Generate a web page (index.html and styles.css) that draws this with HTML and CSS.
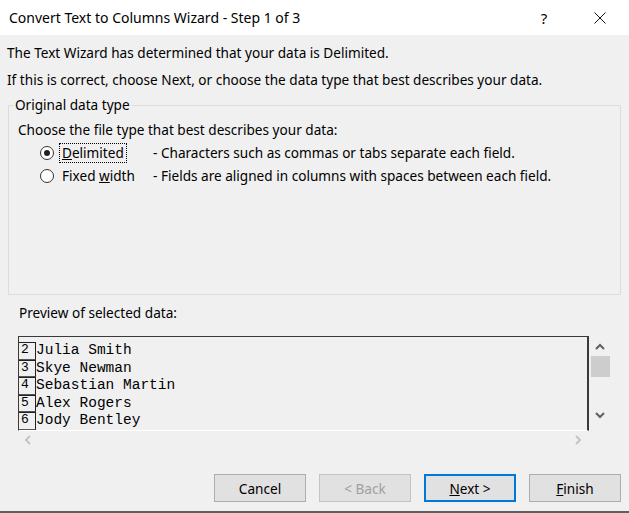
FILE: index.html
```html
<!DOCTYPE html>
<html lang="en">
<head>
<meta charset="utf-8">
<title>Convert Text to Columns Wizard</title>
<link rel="stylesheet" href="styles.css">
</head>
<body>
<div class="window">
  <header class="titlebar">
    <span class="title">Convert Text to Columns Wizard - Step 1 of 3</span>
    <span class="help">?</span>
    <span class="close">
      <svg width="12" height="12" viewBox="0 0 12 12"><path d="M0.5 0.5L11.5 11.5M11.5 0.5L0.5 11.5" stroke="#111" stroke-width="1" fill="none"/></svg>
    </span>
  </header>
  <main class="content">
    <p class="line">The Text Wizard has determined that your data is Delimited.</p>
    <p class="line">If this is correct, choose Next, or choose the data type that best describes your data.</p>
    <fieldset class="group">
      <legend class="legend">Original data type</legend>
      <div class="choose">Choose the file type that best describes your data:</div>
      <div class="option">
        <span class="radio checked"></span>
        <span class="opt-label"><span class="focus"><u>D</u>elimited</span></span>
        <span class="desc">- Characters such as commas or tabs separate each field.</span>
      </div>
      <div class="option">
        <span class="radio"></span>
        <span class="opt-label"><span class="nofocus">Fixed <u>w</u>idth</span></span>
        <span class="desc">- Fields are aligned in columns with spaces between each field.</span>
      </div>
    </fieldset>
    <div class="preview-label">Preview of selected data:</div>
    <div class="preview">
      <div class="pbox">
        <div class="prow"><span class="num">2</span><span class="val">Julia Smith</span></div>
        <div class="prow"><span class="num">3</span><span class="val">Skye Newman</span></div>
        <div class="prow"><span class="num">4</span><span class="val">Sebastian Martin</span></div>
        <div class="prow"><span class="num">5</span><span class="val">Alex Rogers</span></div>
        <div class="prow"><span class="num">6</span><span class="val">Jody Bentley</span></div>
        <div class="prow"><span class="num"></span></div>
      </div>
      <div class="vscroll">
        <span class="arrow-v"><svg width="10" height="7" viewBox="0 0 10 7"><path d="M1 6L5 2L9 6" stroke="#606060" stroke-width="2" fill="none"/></svg></span>
        <span class="thumb"></span>
        <span class="arrow-v down"><svg width="10" height="7" viewBox="0 0 10 7"><path d="M1 1L5 5L9 1" stroke="#606060" stroke-width="2" fill="none"/></svg></span>
      </div>
      <div class="hscroll">
        <svg width="7" height="10" viewBox="0 0 7 10"><path d="M6 1L2 5L6 9" stroke="#c4c4c4" stroke-width="2" fill="none"/></svg>
        <svg width="7" height="10" viewBox="0 0 7 10"><path d="M1 1L5 5L1 9" stroke="#c4c4c4" stroke-width="2" fill="none"/></svg>
      </div>
    </div>
    <div class="buttons">
      <button class="btn">Cancel</button>
      <button class="btn disabled">&lt; Back</button>
      <button class="btn default"><u>N</u>ext &gt;</button>
      <button class="btn"><u>F</u>inish</button>
    </div>
  </main>
  <div class="edge"></div>
</div>
</body>
</html>
```

FILE: styles.css
```css
* { box-sizing: border-box; }

html, body {
  margin: 0;
  padding: 0;
}

body {
  width: 629px;
  height: 513px;
  overflow: hidden;
  background: #f0f0f0;
  font-family: "Noto Sans", "Liberation Sans", sans-serif;
  font-size: 13.6px;
  color: #000;
}

.window {
  width: 629px;
  height: 513px;
  display: flex;
  flex-direction: column;
}

.titlebar {
  height: 35px;
  flex: none;
  background: #fff;
  display: flex;
  align-items: center;
  padding: 0 14px 0 9px;
}

.title {
  font-size: 14px;
  flex: 1;
  white-space: nowrap;
}

.help {
  width: 30px;
  text-align: center;
  font-size: 15px;
}

.close {
  width: 30px;
  margin-left: 26px;
  display: flex;
  justify-content: center;
  align-items: center;
}

.content {
  flex: 1;
  padding: 4px 7px 0 7px;
  display: flex;
  flex-direction: column;
}

.line {
  margin: 0;
  line-height: 27px;
  white-space: nowrap;
}

.group {
  margin: 4px 1px 0 1px;
  padding: 6px 9px 0 9px;
  border: 1px solid #dcdcdc;
  height: 198px;
  min-width: 0;
}

.legend {
  padding: 0 2px;
  margin-left: -5px;
  line-height: 16px;
}

.choose {
  line-height: 22px;
  white-space: nowrap;
}

.option {
  height: 23px;
  display: flex;
  align-items: center;
  white-space: nowrap;
}

.radio {
  width: 14px;
  height: 14px;
  border-radius: 50%;
  border: 1px solid #333;
  background: #fff;
  margin-left: 22px;
  margin-right: 5px;
  flex: none;
  display: flex;
  align-items: center;
  justify-content: center;
}

.radio.checked::after {
  content: "";
  width: 6px;
  height: 6px;
  border-radius: 50%;
  background: #222;
}

.opt-label {
  width: 94px;
  flex: none;
}

.focus, .nofocus {
  display: inline-block;
  line-height: 16px;
  padding: 1px 2px;
  border: 1px dotted #000;
}

.nofocus {
  border-color: transparent;
}

.preview-label {
  margin-top: 8px;
  padding-left: 12px;
  line-height: 20px;
}

.preview {
  margin-top: 13px;
  margin-left: 11px;
  display: grid;
  grid-template-columns: 571px 22px;
  grid-template-rows: 95px 17px;
}

.pbox {
  border-top: 1px solid #3a3a3a;
  border-left: 1px solid #3a3a3a;
  border-right: 2px solid #3a3a3a;
  border-bottom: 1px solid #fff;
  padding-top: 5px;
  overflow: hidden;
  font-family: "Liberation Mono", monospace;
  font-size: 14.5px;
}

.prow {
  height: 17.5px;
  display: flex;
  align-items: stretch;
  flex: none;
}

.num {
  width: 17px;
  flex: none;
  border-top: 1px solid #222;
  border-right: 1px solid #222;
  border-bottom: 1px solid #555;
  padding-left: 2px;
  line-height: 14px;
  font-size: 13px;
}

.val {
  line-height: 17px;
  white-space: pre;
}

.vscroll {
  display: flex;
  flex-direction: column;
  align-items: center;
}

.arrow-v {
  height: 20px;
  display: flex;
  align-items: center;
  justify-content: center;
}

.thumb {
  width: 19px;
  height: 21px;
  background: #cdcdcd;
  margin-left: 1px;
}

.arrow-v.down {
  margin-top: auto;
  margin-bottom: 6px;
}

.hscroll {
  grid-column: 1;
  display: flex;
  align-items: center;
  justify-content: space-between;
  padding: 0 7px 0 6px;
}

.buttons {
  margin-top: 26px;
  display: flex;
  justify-content: flex-end;
  gap: 13px;
  padding-right: 1px;
}

.btn {
  width: 92px;
  height: 28px;
  background: #e1e1e1;
  border: 1px solid #adadad;
  font-family: "Noto Sans", "Liberation Sans", sans-serif;
  font-size: 13.6px;
  color: #000;
  padding: 0;
}

.btn.disabled {
  color: #a0a0a0;
  border-color: #c4c4c4;
}

.btn.default {
  border: 2px solid #0078d7;
}

.edge {
  height: 2px;
  flex: none;
  background: #5f5f5f;
}
```
